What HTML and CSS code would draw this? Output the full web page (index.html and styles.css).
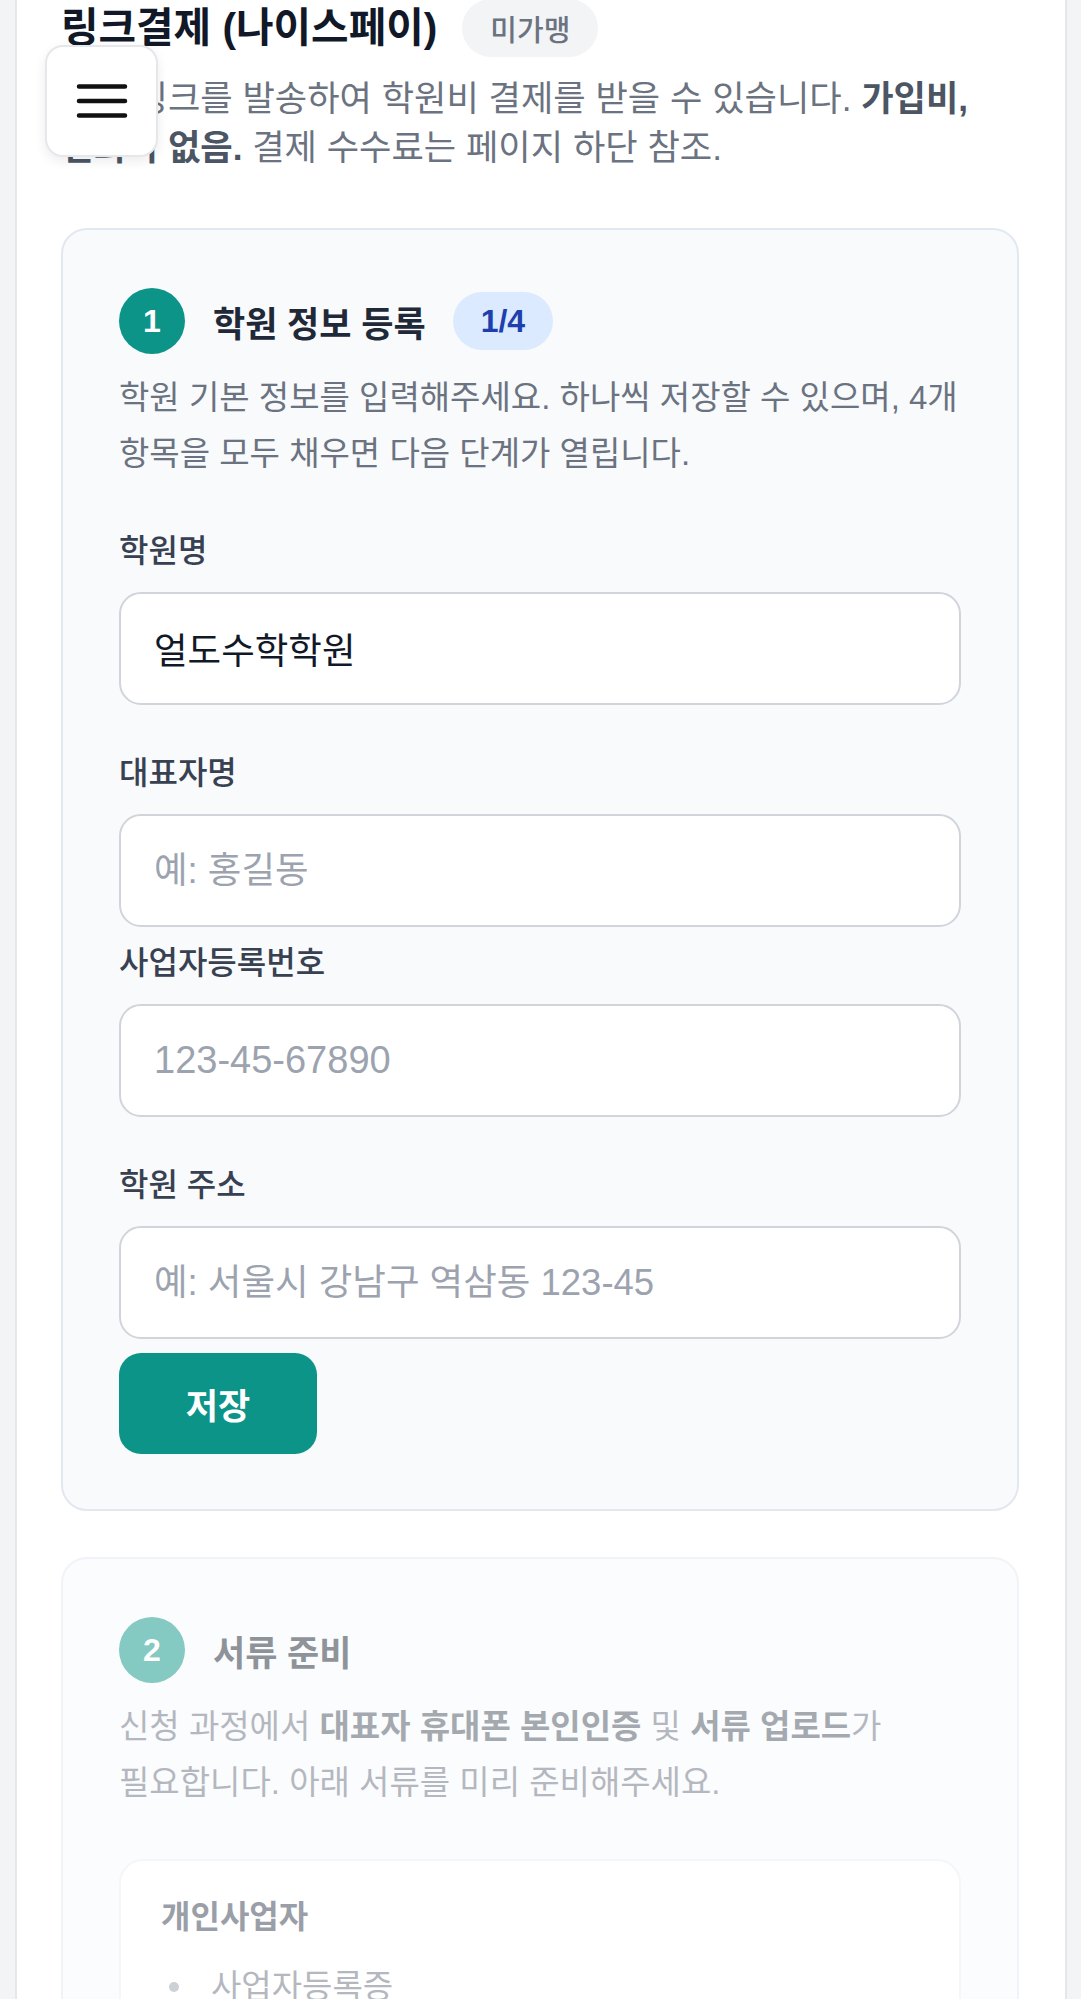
FILE: index.html
```html
<!DOCTYPE html>
<html lang="ko">
<head>
<meta charset="utf-8">
<title>링크결제 (나이스페이)</title>
<link rel="stylesheet" href="styles.css">
</head>
<body>
<button class="menu-btn" type="button" aria-label="메뉴">
  <svg width="52" height="34" viewBox="0 0 52 34" aria-hidden="true"><path d="M3 2.5H49M3 17H49M3 31.5H49" stroke="#111111" stroke-width="4.5" stroke-linecap="round" fill="none"/></svg>
</button>
<main class="panel">
  <div class="page-head">
    <h1 class="page-title">링크결제 (나이스페이)</h1>
    <span class="status-badge">미가맹</span>
  </div>
  <p class="page-desc">결제 링크를 발송하여 학원비 결제를 받을 수 있습니다. <strong>가입비, 연회비 없음.</strong> 결제 수수료는 페이지 하단 참조.</p>

  <section class="step-card">
    <div class="step-head">
      <span class="step-num">1</span>
      <h2 class="step-title">학원 정보 등록</h2>
      <span class="step-count">1/4</span>
    </div>
    <p class="step-desc">학원 기본 정보를 입력해주세요. 하나씩 저장할 수 있으며, 4개 항목을 모두 채우면 다음 단계가 열립니다.</p>

    <div class="field">
      <label class="field-label" for="f-name">학원명</label>
      <input class="field-input" id="f-name" type="text" value="얼도수학학원">
    </div>
    <div class="field">
      <label class="field-label" for="f-owner">대표자명</label>
      <input class="field-input" id="f-owner" type="text" placeholder="예: 홍길동">
    </div>
    <div class="field field--tight">
      <label class="field-label" for="f-biz">사업자등록번호</label>
      <input class="field-input field-input--num" id="f-biz" type="text" placeholder="123-45-67890">
    </div>
    <div class="field">
      <label class="field-label" for="f-addr">학원 주소</label>
      <input class="field-input" id="f-addr" type="text" placeholder="예: 서울시 강남구 역삼동 123-45">
    </div>
    <button class="save-btn" type="button">저장</button>
  </section>

  <section class="step-card step-card--locked">
    <div class="step-head">
      <span class="step-num">2</span>
      <h2 class="step-title">서류 준비</h2>
    </div>
    <p class="step-desc">신청 과정에서 <strong>대표자 휴대폰 본인인증</strong> 및 <strong>서류 업로드</strong>가 필요합니다. 아래 서류를 미리 준비해주세요.</p>
    <div class="doc-box">
      <h3 class="doc-title">개인사업자</h3>
      <ul class="doc-list">
        <li>사업자등록증</li>
        <li>대표자 신분증</li>
        <li>통장 사본</li>
      </ul>
    </div>
  </section>
</main>
</body>
</html>
```

FILE: styles.css
```css
html, body {
  margin: 0;
  padding: 0;
}

body {
  background: #f3f4f6;
  font-family: "Liberation Sans", "Noto Sans CJK KR", sans-serif;
  color: #111827;
  word-break: keep-all;
}

.menu-btn {
  position: fixed;
  top: 45px;
  left: 45px;
  z-index: 10;
  box-sizing: border-box;
  width: 113px;
  height: 112px;
  padding: 0;
  display: flex;
  align-items: center;
  justify-content: center;
  background: #ffffff;
  border: 2px solid #e5e7eb;
  border-radius: 18px;
  box-shadow: 0 4px 12px rgba(0, 0, 0, 0.08);
}

.panel {
  display: block;
  margin: 0 14px 0 15px;
  min-height: 2100px;
  background: #ffffff;
  border: 2px solid #e5e7eb;
  border-top: 0;
  padding: 0 46px 200px 44px;
}

.page-head {
  display: flex;
  align-items: center;
  gap: 25px;
  height: 56px;
}

.page-title {
  margin: 0;
  font-size: 40.8px;
  line-height: 56px;
  font-weight: 700;
  color: #111827;
  white-space: nowrap;
}

.status-badge {
  display: inline-flex;
  align-items: center;
  height: 58px;
  padding: 0 28px;
  border-radius: 29px;
  background: #f3f4f6;
  color: #6b7280;
  font-size: 29px;
  font-weight: 500;
}

.page-desc {
  margin: 19px 0 0;
  font-size: 35.2px;
  line-height: 48.5px;
  color: #6b7280;
}

.page-desc strong {
  font-weight: 700;
  color: #4b5563;
}

.step-card {
  margin-top: 56px;
  background: #f8fafc;
  border: 2px solid #e2e8f0;
  border-radius: 26px;
  padding: 58px 56px 55px;
}

.step-card + .step-card {
  margin-top: 46px;
}

.step-card--locked {
  opacity: 0.5;
}

.step-head {
  display: flex;
  align-items: center;
  height: 66px;
}

.step-num {
  flex: none;
  width: 66px;
  height: 66px;
  border-radius: 50%;
  background: #0d9488;
  color: #ffffff;
  font-size: 32px;
  font-weight: 700;
  display: flex;
  align-items: center;
  justify-content: center;
}

.step-title {
  margin: 0 0 0 28px;
  font-size: 35px;
  font-weight: 700;
  color: #1f2937;
}

.step-count {
  margin-left: 27px;
  display: inline-flex;
  align-items: center;
  height: 58px;
  padding: 0 28px;
  border-radius: 29px;
  background: #dbeafe;
  color: #1e40af;
  font-size: 32px;
  font-weight: 700;
}

.step-desc {
  margin: 16px 0 0;
  font-size: 33px;
  line-height: 56px;
  color: #6b7280;
}

.step-desc strong {
  font-weight: 700;
  color: #4b5563;
}

.field {
  display: flex;
  flex-direction: column;
  margin-top: 47px;
}

.step-desc + .field {
  margin-top: 48px;
}

.field--tight {
  margin-top: 15px;
}

.field-label {
  margin-bottom: 20px;
  font-size: 32px;
  line-height: 42px;
  font-weight: 500;
  color: #374151;
}

.field-input {
  box-sizing: border-box;
  width: 100%;
  height: 113px;
  margin: 0;
  padding: 0 33px;
  border: 2px solid #d1d5db;
  border-radius: 22px;
  background: #ffffff;
  font-family: inherit;
  font-size: 36.5px;
  color: #111827;
  outline: none;
}

.field-input::placeholder {
  color: #9ca3af;
  opacity: 1;
}

.field-input--num {
  font-size: 38px;
}

.save-btn {
  display: block;
  margin-top: 14px;
  width: 198px;
  height: 101px;
  padding: 0;
  border: 0;
  border-radius: 22px;
  background: #0d9488;
  color: #ffffff;
  font-family: inherit;
  font-size: 35px;
  font-weight: 700;
}

.doc-box {
  margin-top: 48px;
  background: #ffffff;
  border: 2px solid #eceef1;
  border-radius: 24px;
  padding: 36px 40px 40px;
}

.doc-title {
  margin: 0;
  font-size: 32px;
  line-height: 40px;
  font-weight: 700;
  color: #374151;
}

.doc-list {
  list-style: none;
  margin: 24px 0 0;
  padding: 0;
  font-size: 33px;
  line-height: 52px;
  color: #6b7280;
}

.doc-list li {
  display: flex;
  align-items: center;
}

.doc-list li::before {
  content: "";
  flex: none;
  width: 10px;
  height: 10px;
  margin: 0 32px 0 8px;
  border-radius: 50%;
  background: #9ca3af;
}
```
